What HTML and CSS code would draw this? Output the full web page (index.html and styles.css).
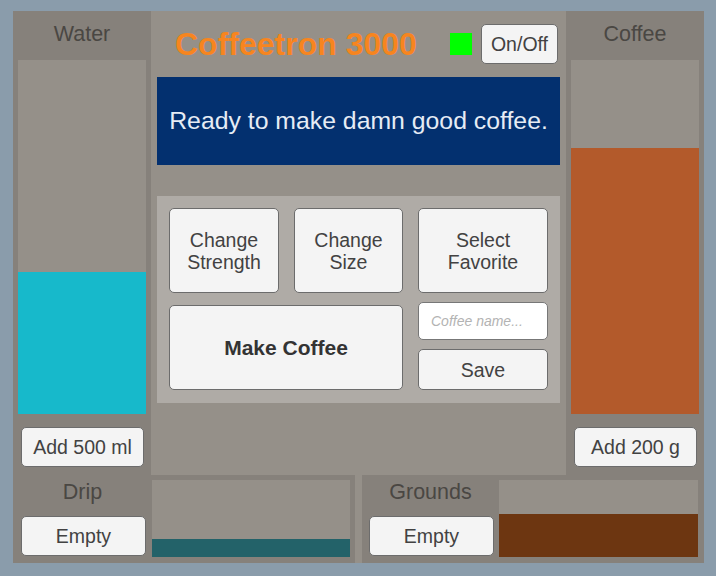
FILE: index.html
```html
<!DOCTYPE html>
<html lang="en">
<head>
<meta charset="utf-8">
<title>Coffeetron 3000</title>
<link rel="stylesheet" href="styles.css">
</head>
<body>
<div class="machine">
  <div class="top-row">
    <section class="tank">
      <div class="tank-label">Water</div>
      <div class="meter"><div class="fill fill-water" style="height:142px"></div></div>
      <button class="btn tank-btn">Add 500 ml</button>
    </section>

    <main class="center">
      <header class="head">
        <h1 class="title">Coffeetron 3000</h1>
        <span class="power-led"></span>
        <button class="btn power-btn">On/Off</button>
      </header>
      <div class="display">Ready to make damn good coffee.</div>
      <div class="controls">
        <button class="btn ctl">Change<br>Strength</button>
        <button class="btn ctl">Change<br>Size</button>
        <button class="btn ctl">Select<br>Favorite</button>
        <button class="btn ctl make">Make Coffee</button>
        <div class="fav-stack">
          <input class="fav-name" type="text" placeholder="Coffee name...">
          <button class="btn save">Save</button>
        </div>
      </div>
    </main>

    <section class="tank">
      <div class="tank-label">Coffee</div>
      <div class="meter"><div class="fill fill-coffee" style="height:266px"></div></div>
      <button class="btn tank-btn">Add 200 g</button>
    </section>
  </div>

  <div class="bottom-row">
    <section class="bin">
      <div class="bin-side">
        <div class="bin-label">Drip</div>
        <button class="btn bin-btn">Empty</button>
      </div>
      <div class="bin-meter"><div class="fill fill-drip" style="height:18px"></div></div>
    </section>
    <section class="bin bin-grounds">
      <div class="bin-side">
        <div class="bin-label">Grounds</div>
        <button class="btn bin-btn">Empty</button>
      </div>
      <div class="bin-meter"><div class="fill fill-grounds" style="height:43px"></div></div>
    </section>
  </div>
</div>
</body>
</html>
```

FILE: styles.css
```css
* { box-sizing: border-box; }

html, body {
  margin: 0;
  padding: 0;
}

body {
  background: #8a9cab;
  font-family: "Liberation Sans", Arial, sans-serif;
  width: 716px;
  height: 576px;
  overflow: hidden;
}

.machine {
  margin: 11px 0 0 13px;
  width: 691px;
  height: 552px;
  background: #959089;
  display: flex;
  flex-direction: column;
}

.top-row {
  display: flex;
  height: 464px;
}

.bottom-row {
  display: flex;
  gap: 7px;
  height: 88px;
}

/* side tanks */
.tank {
  width: 138px;
  background: #86817b;
  display: flex;
  flex-direction: column;
}

.tank-label {
  height: 46px;
  display: flex;
  align-items: center;
  justify-content: center;
  font-size: 21.5px;
  color: #4a4743;
}

.meter {
  margin: 3px 5px 0 5px;
  height: 354px;
  background: #959089;
  display: flex;
  flex-direction: column;
  justify-content: flex-end;
}

.fill { width: 100%; }
.fill-water { background: #17b9cb; }
.fill-coffee { background: #b35a2b; }
.fill-drip { background: #236269; }
.fill-grounds { background: #6d3611; }

.btn {
  font-family: "Liberation Sans", Arial, sans-serif;
  background: #f4f4f4;
  border: 1px solid #6c6c6c;
  border-radius: 5px;
  color: #424242;
  font-size: 19.5px;
  padding: 0;
  line-height: 22px;
  cursor: pointer;
}

.tank-btn {
  margin: 13px 0 0 8px;
  width: 123px;
  height: 40px;
}

/* center */
.center {
  flex: 1;
  display: flex;
  flex-direction: column;
  padding: 0 6px;
}

.head {
  height: 66px;
  display: flex;
  align-items: center;
  padding: 0 2px 0 18px;
}

.title {
  margin: 0;
  flex: 1;
  font-size: 32px;
  font-weight: bold;
  color: #f7851f;
}

.power-led {
  width: 22px;
  height: 22px;
  background: #00ff00;
  margin-right: 9px;
}

.power-btn {
  width: 77px;
  height: 40px;
}

.display {
  height: 88px;
  background: #03306f;
  color: #e6ecf5;
  font-size: 24.8px;
  display: flex;
  align-items: center;
  justify-content: center;
}

.controls {
  margin-top: 31px;
  height: 207px;
  background: #afaba6;
  padding: 12px 12px 13px 12px;
  display: grid;
  grid-template-columns: 110px 109px 130px;
  grid-template-rows: 85px 88px;
  column-gap: 15px;
  row-gap: 9px;
}

.ctl {
  width: 100%;
  height: 100%;
}

.make {
  grid-column: 1 / 3;
  height: 85px;
  align-self: end;
  font-weight: bold;
  font-size: 21px;
  color: #333333;
}

.fav-stack {
  display: flex;
  flex-direction: column;
  gap: 9px;
}

.fav-name {
  height: 38px;
  background: #ffffff;
  border: 1px solid #777777;
  border-radius: 5px;
  padding: 0 0 0 12px;
  font-family: "Liberation Sans", Arial, sans-serif;
  font-size: 14px;
  font-style: italic;
  outline: none;
}

.fav-name::placeholder {
  color: #b3b3b3;
  font-style: italic;
}

.save {
  height: 41px;
}

/* bottom bins */
.bin {
  width: 342px;
  background: #86817b;
  display: flex;
}

.bin-side {
  width: 139px;
  display: flex;
  flex-direction: column;
}

.bin-grounds .bin-side { width: 137px; }

.bin-label {
  height: 35px;
  display: flex;
  align-items: center;
  justify-content: center;
  font-size: 21.5px;
  color: #4a4743;
}

.bin-btn {
  margin: 6px 6px 0 8px;
  height: 40px;
}

.bin-grounds .bin-btn { margin: 6px 5px 0 7px; }

.bin-meter {
  flex: 1;
  margin: 5px 5px 6px 0;
  background: #959089;
  display: flex;
  flex-direction: column;
  justify-content: flex-end;
}

.bin-grounds .bin-meter { margin-right: 6px; }
```
